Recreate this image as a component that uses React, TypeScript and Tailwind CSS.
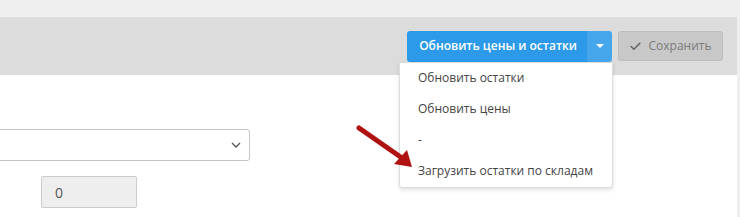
import { Check } from "lucide-react";

const menuItems = [
  "Обновить остатки",
  "Обновить цены",
  "-",
  "Загрузить остатки по складам",
];

const App = () => {
  return (
    <div
      className="relative flex h-[217px] w-[740px] overflow-hidden bg-white text-[12px] text-[#333]"
      style={{ fontFamily: '"Open Sans", "Noto Sans", sans-serif' }}
    >
      <div className="flex flex-1 flex-col">
        {/* Top band */}
        <div className="h-[17px] bg-[#efefef]" />

        {/* Toolbar */}
        <div className="flex h-[58px] items-center justify-end bg-[#dcdcdd] pr-[14px]">
          <div className="relative flex h-[31px]">
            <button className="flex items-center whitespace-nowrap rounded-l-[3px] bg-[#2c9ae8] pl-[12px] pr-[10px] font-semibold text-white">
              Обновить цены и остатки
            </button>
            <button className="flex w-[25px] items-center justify-center rounded-r-[3px] bg-[#46a6ec]">
              <span className="h-0 w-0 border-x-[4px] border-t-[4px] border-x-transparent border-t-white" />
            </button>

            {/* Dropdown */}
            <div className="absolute right-[-1px] top-full z-10 w-[214px] rounded-b-[3px] border border-[#dcdcdc] bg-white shadow-[0_2px_4px_rgba(0,0,0,0.12)]">
              {menuItems.map((item) => (
                <div key={item} className="flex h-[31px] items-center whitespace-nowrap px-[18px] text-[#444]">
                  {item}
                </div>
              ))}
            </div>
          </div>

          <button className="ml-[6px] flex h-[30px] w-[105px] items-center justify-center gap-[6px] rounded-[3px] border border-[#bdbdbd] bg-[#c8c8c8] text-[#7b7b7b]">
            <Check className="h-[13px] w-[13px] text-[#666]" strokeWidth={3} />
            Сохранить
          </button>
        </div>

        {/* Form content */}
        <div className="flex flex-col pt-[54px]">
          <div className="ml-[-10px] flex h-[32px] w-[260px] items-center justify-end rounded-[3px] border border-[#c4c4c4] bg-white pr-[8px]">
            <svg width="10" height="6" viewBox="0 0 10 6" fill="none">
              <path d="M1 1l4 4 4-4" stroke="#555" strokeWidth="1.3" />
            </svg>
          </div>
          <div className="ml-[41px] mt-[15px] flex h-[32px] w-[96px] items-center rounded-[2px] border border-[#cccccc] bg-[#eeeeee] px-[13px] text-[14px] text-[#555]">
            0
          </div>
        </div>
      </div>

      {/* Right strip */}
      <div className="w-[3px] bg-[#efefef]" />

      {/* Annotation arrow */}
      <svg className="pointer-events-none absolute left-[350px] top-[120px] z-20" width="70" height="55" viewBox="0 0 70 55">
        <path d="M9 8 L52 38" stroke="#b01212" strokeWidth="5" strokeLinecap="round" />
        <path d="M44 44 L62 47 L57 30 Z" fill="#b01212" />
      </svg>
    </div>
  );
};

export default App;
